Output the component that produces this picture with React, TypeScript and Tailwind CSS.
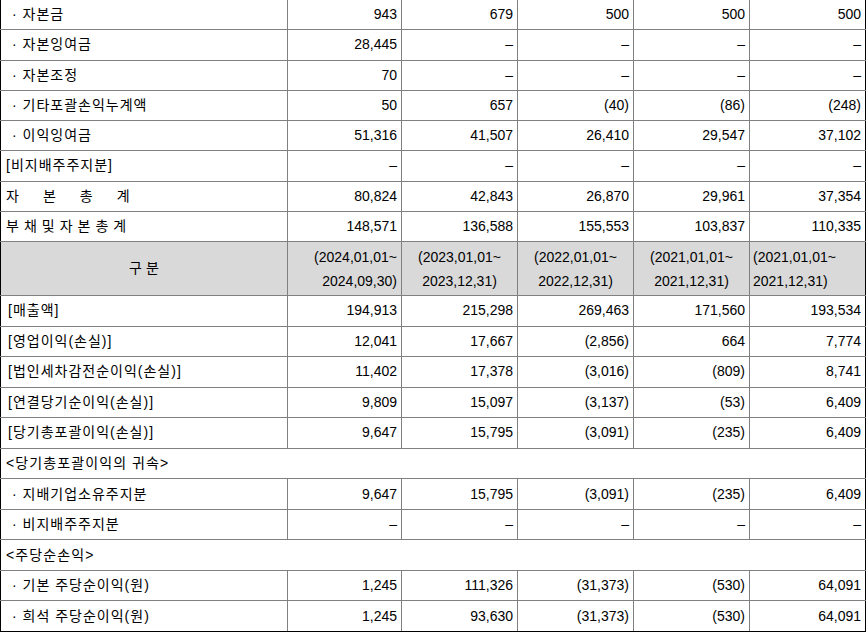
const D = "–";

type Row =
  | { kind: "data"; label: React.ReactNode; pad: string; values: string[] }
  | { kind: "span"; label: string };

const top: Row[] = [
  { kind: "data", label: "· 자본금", pad: "pl-[11px]", values: ["943", "679", "500", "500", "500"] },
  { kind: "data", label: "· 자본잉여금", pad: "pl-[11px]", values: ["28,445", D, D, D, D] },
  { kind: "data", label: "· 자본조정", pad: "pl-[11px]", values: ["70", D, D, D, D] },
  { kind: "data", label: "· 기타포괄손익누계액", pad: "pl-[11px]", values: ["50", "657", "(40)", "(86)", "(248)"] },
  { kind: "data", label: "· 이익잉여금", pad: "pl-[11px]", values: ["51,316", "41,507", "26,410", "29,547", "37,102"] },
  { kind: "data", label: "[비지배주주지분]", pad: "pl-[5px]", values: [D, D, D, D, D] },
  { kind: "data", label: <Spread chars={["자", "본", "총", "계"]} gap="gap-[23px]" />, pad: "pl-[5px]", values: ["80,824", "42,843", "26,870", "29,961", "37,354"] },
  { kind: "data", label: <Spread chars={["부", "채", "및", "자", "본", "총", "계"]} gap="gap-[4px]" />, pad: "pl-[5px]", values: ["148,571", "136,588", "155,553", "103,837", "110,335"] },
];

const bottom: Row[] = [
  { kind: "data", label: "[매출액]", pad: "pl-[7px]", values: ["194,913", "215,298", "269,463", "171,560", "193,534"] },
  { kind: "data", label: "[영업이익(손실)]", pad: "pl-[7px]", values: ["12,041", "17,667", "(2,856)", "664", "7,774"] },
  { kind: "data", label: "[법인세차감전순이익(손실)]", pad: "pl-[7px]", values: ["11,402", "17,378", "(3,016)", "(809)", "8,741"] },
  { kind: "data", label: "[연결당기순이익(손실)]", pad: "pl-[7px]", values: ["9,809", "15,097", "(3,137)", "(53)", "6,409"] },
  { kind: "data", label: "[당기총포괄이익(손실)]", pad: "pl-[7px]", values: ["9,647", "15,795", "(3,091)", "(235)", "6,409"] },
  { kind: "span", label: "<당기총포괄이익의 귀속>" },
  { kind: "data", label: "· 지배기업소유주지분", pad: "pl-[11px]", values: ["9,647", "15,795", "(3,091)", "(235)", "6,409"] },
  { kind: "data", label: "· 비지배주주지분", pad: "pl-[11px]", values: [D, D, D, D, D] },
  { kind: "span", label: "<주당순손익>" },
  { kind: "data", label: "· 기본 주당순이익(원)", pad: "pl-[11px]", values: ["1,245", "111,326", "(31,373)", "(530)", "64,091"] },
  { kind: "data", label: "· 희석 주당순이익(원)", pad: "pl-[11px]", values: ["1,245", "93,630", "(31,373)", "(530)", "64,091"] },
];

const colW = ["w-[114px]", "w-[116px]", "w-[116px]", "w-[116px]", "w-[116px]"];

const periods = [
  { a: "(2024,01,01~", b: "2024,09,30)", align: "items-end pr-[4px]" },
  { a: "(2023,01,01~", b: "2023,12,31)", align: "items-center" },
  { a: "(2022,01,01~", b: "2022,12,31)", align: "items-center" },
  { a: "(2021,01,01~", b: "2021,12,31)", align: "items-center" },
  { a: "(2021,01,01~", b: "2021,12,31)", align: "items-start pl-[3px]" },
];

function Spread({ chars, gap }: { chars: string[]; gap: string }) {
  return (
    <span className={`flex ${gap}`}>
      {chars.map((c, i) => (
        <span key={i}>{c}</span>
      ))}
    </span>
  );
}

function TableRow({ row, h, last }: { row: Row; h: string; last?: boolean }) {
  const bb = last ? "border-b border-black" : "border-b border-[#808080]";
  if (row.kind === "span") {
    return (
      <div className={`flex ${h} ${bb}`}>
        <div className="flex flex-1 items-center pl-[5px] text-[14px] tracking-[1.1px] border-l border-r border-l-black border-r-black">
          {row.label}
        </div>
      </div>
    );
  }
  return (
    <div className={`flex ${h} ${bb}`}>
      <div
        className={`flex w-[288px] items-center ${row.pad} text-[14px] tracking-[1px] border-l border-r border-l-black border-r-[#808080]`}
      >
        {row.label}
      </div>
      {row.values.map((v, i) => (
        <div
          key={i}
          className={`flex ${colW[i]} items-center justify-end pr-[4px] text-[14px] border-r ${
            i === 4 ? "border-r-black" : "border-r-[#808080]"
          }`}
        >
          {v}
        </div>
      ))}
    </div>
  );
}

export default function App() {
  return (
    <div className="w-[866px] h-[632px] overflow-hidden bg-white text-black text-[14px] font-['Liberation_Sans','Noto_Sans_CJK_KR',sans-serif]">
      {top.map((r, i) => (
        <TableRow key={i} row={r} h="h-[30.25px]" />
      ))}
      <div className="flex h-[54px] bg-[#d9d9d9] border-b border-[#808080]">
        <div className="flex w-[288px] items-center justify-center border-l border-r border-l-black border-r-[#808080]">
          <span className="flex gap-[4px]">
            <span>구</span>
            <span>분</span>
          </span>
        </div>
        {periods.map((p, i) => (
          <div
            key={i}
            className={`flex flex-col justify-center ${colW[i]} ${p.align} text-[14px] leading-[24px] border-r ${
              i === 4 ? "border-r-black" : "border-r-[#808080]"
            }`}
          >
            <span>{p.a}</span>
            <span>{p.b}</span>
          </div>
        ))}
      </div>
      {bottom.map((r, i) => (
        <TableRow key={i} row={r} h="h-[30.55px]" last={i === bottom.length - 1} />
      ))}
    </div>
  );
}
